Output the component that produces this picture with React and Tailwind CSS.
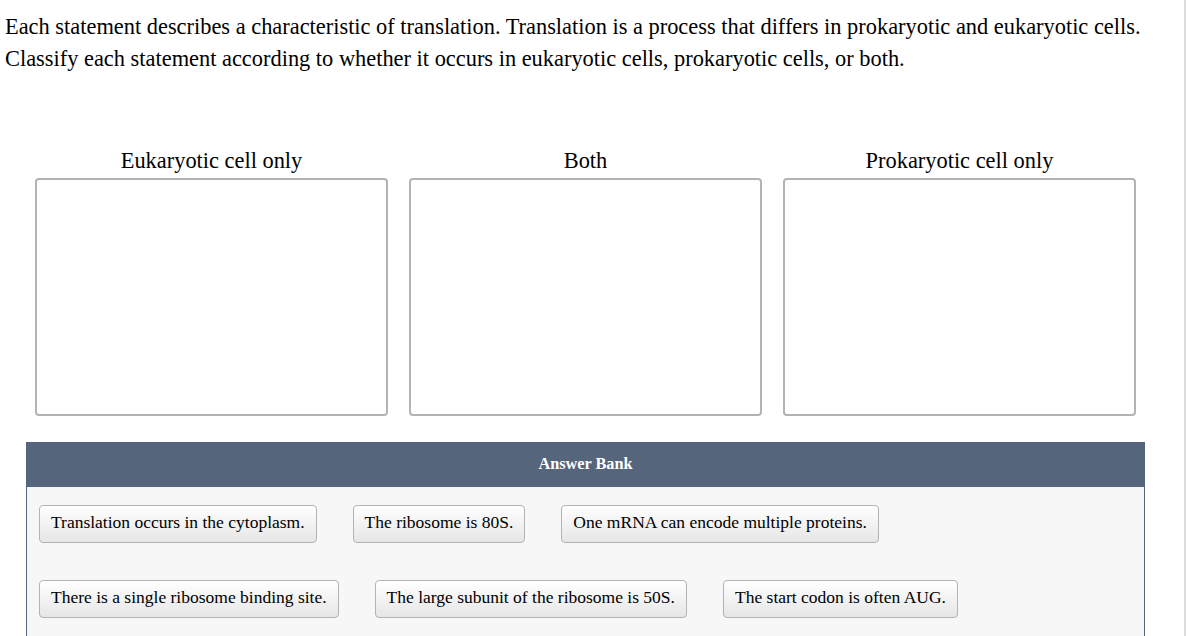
import React from 'react';

const columns = ['Eukaryotic cell only', 'Both', 'Prokaryotic cell only'];

const rows = [
  ['Translation occurs in the cytoplasm.', 'The ribosome is 80S.', 'One mRNA can encode multiple proteins.'],
  ['There is a single ribosome binding site.', 'The large subunit of the ribosome is 50S.', 'The start codon is often AUG.'],
];

function Chip({ text }) {
  return (
    <div className="h-[38px] px-[11px] pb-[3px] flex items-center rounded-[4px] border border-[#b3b3b3] bg-gradient-to-b from-white to-[#e6e6e6] text-[17.5px] text-black whitespace-nowrap">
      {text}
    </div>
  );
}

export default function App() {
  return (
    <div className="w-[1186px] h-[636px] overflow-hidden bg-white border-r-2 border-[#dcdcdc] text-black font-[family-name:'Liberation_Serif','Times_New_Roman',serif]">
      <p className="pl-[5px] pt-[11px] text-[22.4px] leading-[32px]">
        Each statement describes a characteristic of translation. Translation is a process that differs in prokaryotic and eukaryotic cells.
        <br />
        Classify each statement according to whether it occurs in eukaryotic cells, prokaryotic cells, or both.
      </p>

      <div className="flex gap-[21px] pl-[35px] mt-[73px]">
        {columns.map((c) => (
          <div key={c} className="w-[353px] flex flex-col">
            <div className="text-center text-[22.4px] leading-[26px] mb-[4px]">{c}</div>
            <div className="h-[238px] rounded-[4px] border-2 border-[#b3b3b3] bg-white" />
          </div>
        ))}
      </div>

      <div className="ml-[26px] mt-[26px] w-[1119px]">
        <div className="h-[45px] bg-[#55657c] flex items-center justify-center text-white font-bold text-[16.3px]">
          Answer Bank
        </div>
        <div className="bg-[#f7f7f7] border-x border-[#55657c] h-[200px] pl-[12px] pt-[18px] flex flex-col gap-[37px]">
          {rows.map((r, i) => (
            <div key={i} className="flex gap-[36px]">
              {r.map((t) => (
                <Chip key={t} text={t} />
              ))}
            </div>
          ))}
        </div>
      </div>
    </div>
  );
}
